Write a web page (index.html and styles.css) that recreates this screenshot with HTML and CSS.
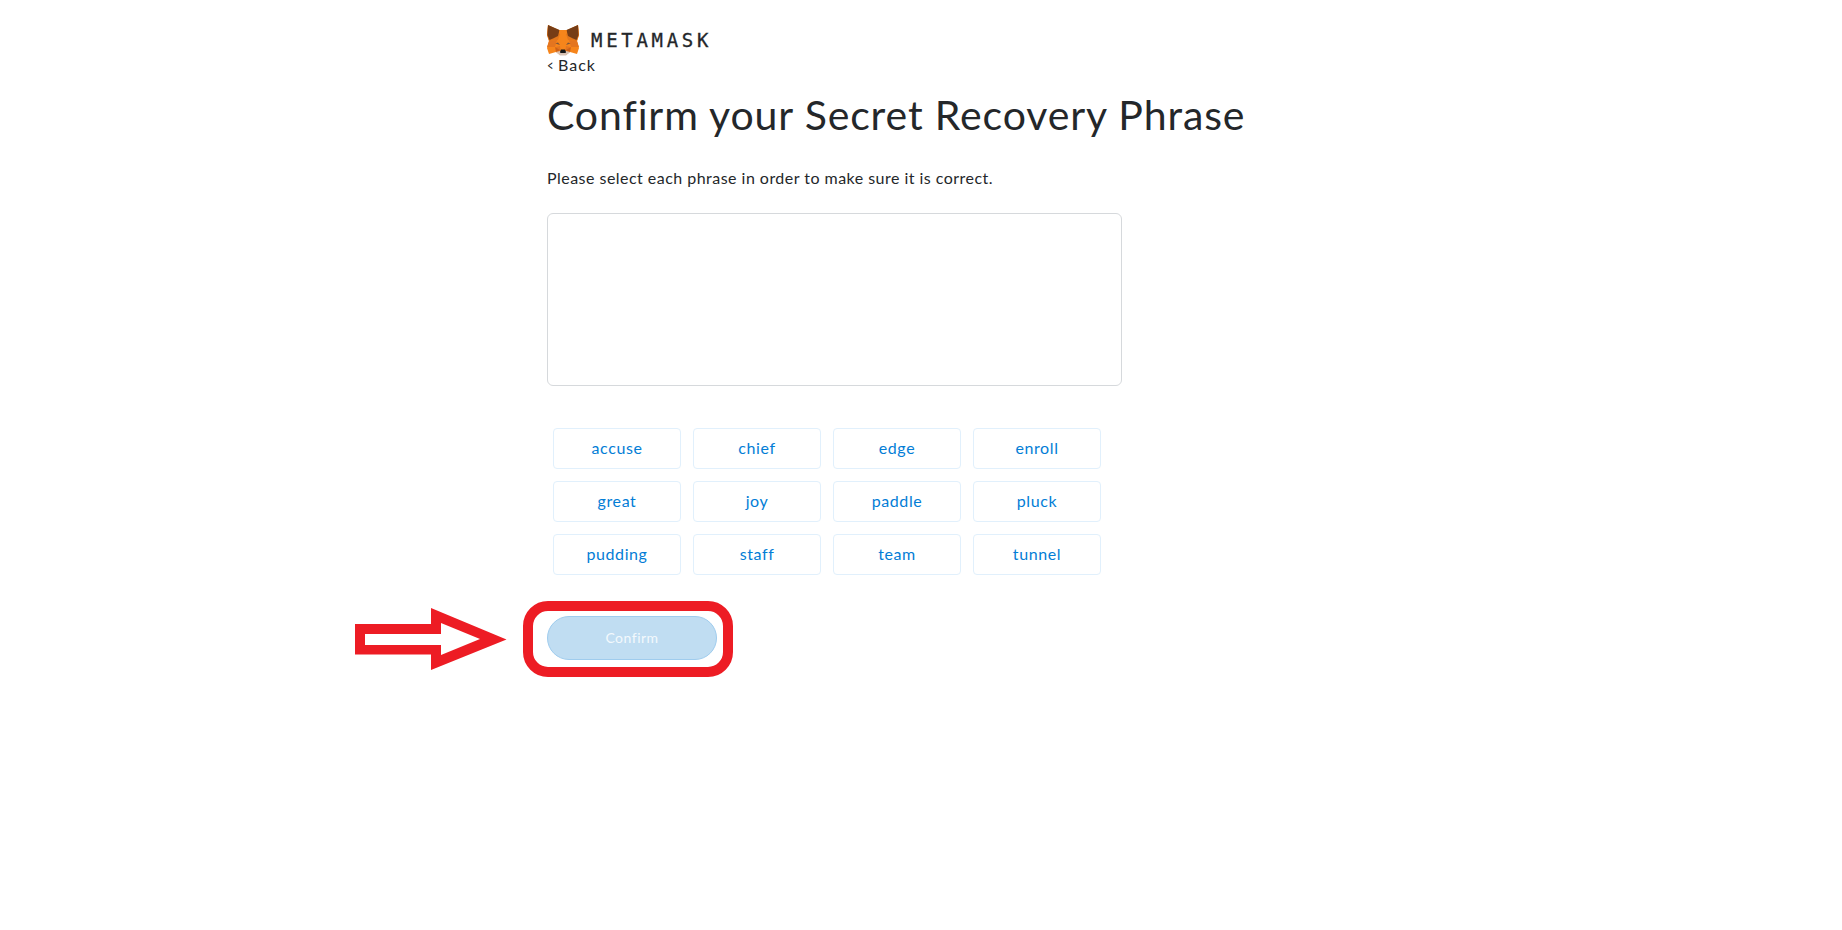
FILE: index.html
```html
<!DOCTYPE html>
<html lang="en">
<head>
<meta charset="utf-8">
<title>MetaMask</title>
<link rel="stylesheet" href="styles.css">
</head>
<body>
<main class="page">
  <header class="logo">
    <svg class="fox" viewBox="0 0 32 31" aria-hidden="true">
      <path fill="#f6851b" d="M1 0 12 5H20L31 0 32 10 30 16 32 23 30 29 23 27 19 30H13L9 27 2 29 0 23 2 16 0 10Z"/>
      <path fill="#e2761b" d="M1 0 13 9 11 15 2 16 0 10ZM31 0 19 9 21 15 30 16 32 10Z"/>
      <path fill="#763d16" d="M1 0 12.500 5 11 11 6 13.500 2.500 15 .5 10ZM31 0 19.500 5 21 11 26 13.500 29.500 15 31.500 10Z"/>
      <path fill="#f6851b" d="M12.500 5H19.500L18 18H14Z"/>
      <path fill="#e4751f" d="M2 16 10 15 8 22H0ZM30 16 22 15 24 22H32ZM9 22 13 21 14 27 9 27ZM23 22 19 21 18 27 23 27Z"/>
      <path fill="#cd6116" d="M8 22 9 27 13 25ZM24 22 23 27 19 25Z"/>
      <path fill="#76543f" d="M8.500 18.500 11 17.500 13 20ZM23.500 18.500 21 17.500 19 20Z"/>
      <path fill="#d7c1b3" d="M9 27 13 26H19L23 27 19 30.500H13Z"/>
      <path fill="#161616" d="M14 24.500H18L19 27 18.500 28H13.500L13 27Z"/>
    </svg>
    <span class="wordmark">METAMASK</span>
  </header>
  <a class="back"><span class="chevron">&lt;</span>Back</a>
  <h1 class="title">Confirm your Secret Recovery Phrase</h1>
  <p class="hint">Please select each phrase in order to make sure it is correct.</p>
  <div class="selected"></div>
  <div class="words">
    <button class="word">accuse</button><button class="word">chief</button><button class="word">edge</button><button class="word">enroll</button>
    <button class="word">great</button><button class="word">joy</button><button class="word">paddle</button><button class="word">pluck</button>
    <button class="word">pudding</button><button class="word">staff</button><button class="word">team</button><button class="word">tunnel</button>
  </div>
  <div class="action">
    <button class="confirm">Confirm</button>
    <div class="ring"></div>
    <svg class="arrow" viewBox="0 0 154 64" aria-hidden="true">
      <path fill="#ed1c24" fill-rule="evenodd" d="M0 17H76V1L151.500 32.500 76 63V47.500H0ZM10 27V38H86V48L125 32 86 16V27Z"/>
    </svg>
  </div>
</main>
</body>
</html>
```
FILE: styles.css
```css
* { box-sizing: border-box; }
body { margin: 0; background: #fff; color: #24272a; font-family: Lato, "Open Sans", sans-serif; }
.page { width: 742px; min-height: 930px; margin-left: 547px; padding-top: 24px; }
.logo { display: flex; align-items: center; height: 31px; }
.fox { width: 32px; height: 31px; margin-top: 2px; }
.wordmark { margin-left: 12px; font: 19px/32px "DejaVu Sans Mono", monospace; letter-spacing: 3.7px; -webkit-text-stroke: .3px #24272a; }
.back { display: flex; font-size: 16px; line-height: 20px; letter-spacing: 1px; }
.chevron { width: 11px; transform: scaleX(.7); transform-origin: left; }
.title { margin: 12px 0 0; font-size: 41px; line-height: 56px; font-weight: 400; letter-spacing: .87px; white-space: nowrap; }
.hint { margin: 23px 0 0; font-size: 16px; line-height: 24px; letter-spacing: .47px; white-space: nowrap; }
.selected { width: 575px; height: 173px; margin-top: 23px; border: 1px solid #d6d9dc; border-radius: 6px; }
.words { display: grid; grid-template-columns: repeat(4, 128px); grid-auto-rows: 41px; gap: 12px; margin: 42px 0 0 6px; }
.word { padding: 0 0 2px; border: 1px solid #e1f0fc; border-radius: 4px; background: #fff; color: #037dd6; font: inherit; font-size: 16px; letter-spacing: .6px; }
.action { position: relative; width: 170px; height: 44px; margin-top: 41px; }
.confirm { width: 170px; height: 44px; padding: 0 0 2px; border: 1px solid #9fccee; border-radius: 22px; background: #c0ddf2; color: #f3f9fd; font: inherit; font-size: 14px; letter-spacing: .5px; }
.ring { position: absolute; left: -24px; top: -15px; width: 210px; height: 76px; border: 10px solid #ed1c24; border-radius: 25px; }
.arrow { position: absolute; left: -192px; top: -9px; width: 154px; height: 64px; }
```
